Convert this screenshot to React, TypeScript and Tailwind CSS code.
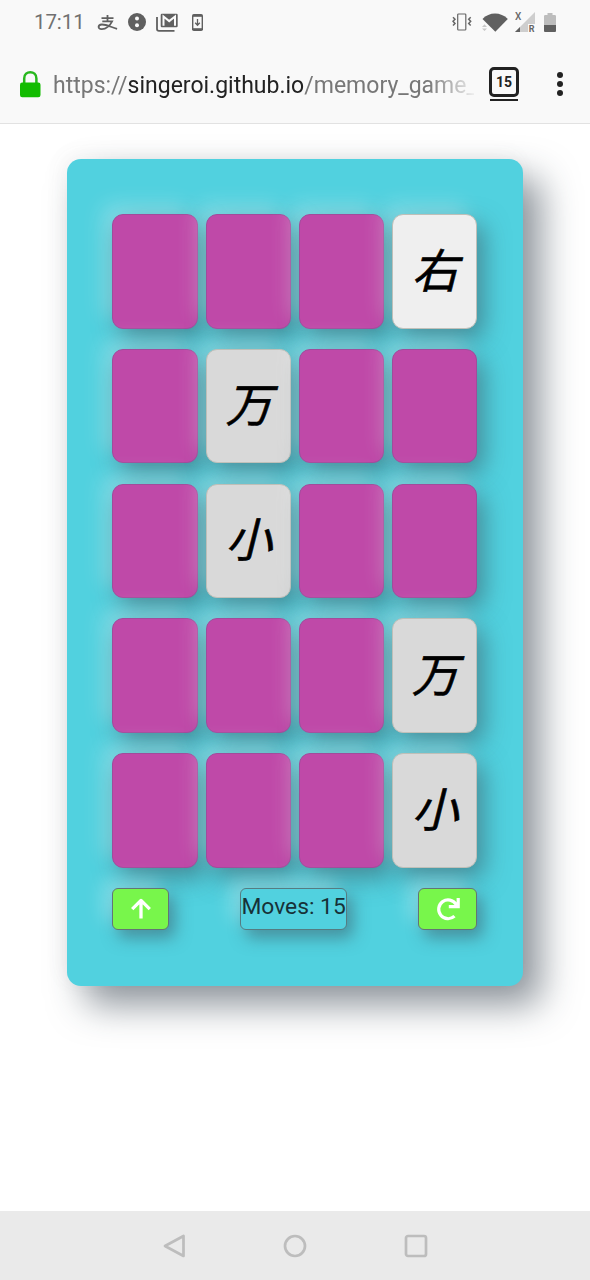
import React from "react";

type Card = { face?: string; active?: boolean };

const rows: Card[][] = [
  [{}, {}, {}, { face: "右", active: true }],
  [{}, { face: "万" }, {}, {}],
  [{}, { face: "小" }, {}, {}],
  [{}, {}, {}, { face: "万" }],
  [{}, {}, {}, { face: "小" }],
];

const raised =
  "shadow-[7px_10px_25px_rgba(55,84,95,0.56),-10px_-10px_20px_rgba(255,255,255,0.28)]";

const raisedSmall =
  "shadow-[6px_8px_16px_rgba(55,84,95,0.5),-10px_-9px_18px_rgba(255,255,255,0.27)]";

function StatusBar() {
  return (
    <div className="flex h-[44px] items-center justify-between pr-[34px] pl-[34px] text-[#707070]">
      <div className="flex items-center">
        <span className="w-[63px] pt-px text-[20.5px] leading-none tracking-[-0.1px]">17:11</span>
        <svg width="21" height="16" viewBox="0 0 20 16" fill="none" stroke="#606060" strokeWidth="1.8" className="mt-px">
          <path d="M4 3.1H16M10 0V6.3M4.8 6.4H14.6C12.6 10.5 8.5 14.3 4.2 14.2C0 14 .1 9.8 4.3 9.5C9.5 9.4 14 12.5 19.6 13.8" />
        </svg>
        <svg width="18" height="18" viewBox="0 0 18 18" className="ml-[10px]">
          <circle cx="9" cy="9" r="9" fill="#606060" />
          <circle cx="9" cy="5.6" r="2" fill="#fafafa" />
          <circle cx="9" cy="12.2" r="2" fill="#fafafa" />
        </svg>
        <svg width="23" height="19" viewBox="0 0 23 19" className="ml-[10px]" fill="none">
          <path d="M1 4V16Q1 17.8 3 17.8H18.5" stroke="#606060" strokeWidth="1.8" />
          <rect x="4.7" y=".8" width="17" height="13.5" rx="1.2" fill="#606060" />
          <path d="M7.5 12.8V3.5L13.2 8.1L19 3.5V12.8" stroke="#fafafa" strokeWidth="2" />
        </svg>
        <svg width="11" height="17" viewBox="0 0 11 17" className="ml-[13px]">
          <rect width="11" height="17" rx="1.8" fill="#606060" />
          <rect x="1.4" y="2.8" width="8.2" height="11.4" fill="#fafafa" />
          <path d="M5.5 5V11M3.2 8.8L5.5 11.2L7.8 8.8" stroke="#606060" strokeWidth="1.3" fill="none" />
        </svg>
      </div>
      <div className="flex items-center">
        <svg width="20" height="18" viewBox="0 0 20 18" fill="none" stroke="#666" strokeWidth="1.2">
          <rect x="5.7" y="1" width="8.1" height="16" rx=".8" />
          <path d="M1 4.2L3 6.2L1 8.3L3 10.5L1 12.6M18.7 4.2L16.7 6.2L18.7 8.3L16.7 10.5L18.7 12.6" strokeWidth="1.5" />
        </svg>
        <svg width="26" height="19" viewBox="0 0 26 19" className="ml-[10px]">
          <path d="M.5 6C7-1.4 19-1.4 25.8 6L13.3 18.8Z" fill="#606060" />
          <path d="M0 14L2.5 11.3L5 14ZM0 15.5L2.5 18L5 15.5Z" fill="#c8c8c8" />
        </svg>
        <svg width="21" height="22" viewBox="0 0 21 22" className="ml-[7px]">
          <path d="M0 21L20 1V21Z" fill="#cecece" />
          <path d="M0 21L5 16V21Z" fill="#606060" />
          <rect x="13" y="13" width="8" height="9" fill="#fafafa" />
          <text x="0" y="8.5" fontFamily="Roboto" fontSize="10" fontWeight="500" fill="#666">X</text>
          <text x="13.7" y="20.8" fontFamily="Roboto" fontSize="9" fontWeight="700" fill="#666">R</text>
        </svg>
        <svg width="12" height="19" viewBox="0 0 12 19" className="ml-[8px]">
          <path d="M3.5 0H8.5V2H10.8Q12 2 12 3.2V12H0V3.2Q0 2 1.2 2H3.5Z" fill="#bdbdbd" />
          <path d="M0 12H12V18Q12 19 11 19H1Q0 19 0 18Z" fill="#606060" />
        </svg>
      </div>
    </div>
  );
}

function AddressBar() {
  return (
    <div className="flex h-[79px] items-center">
      <svg width="21" height="27" viewBox="0 0 21 27" className="mt-[2px] ml-[20px]">
        <path d="M4.2 13V7.4C4.2-.8 16.4-.8 16.4 7.4V13" fill="none" stroke="#28b81e" strokeWidth="2.5" />
        <rect x="0" y="11.5" width="20.5" height="14.7" rx="2.2" fill="#12bc00" />
      </svg>
      <div className="mt-[4px] ml-[12px] w-[421px] text-[23px] leading-[30px] whitespace-nowrap text-[#777] [mask-image:linear-gradient(to_right,black_89%,transparent_101%)]">
        https://<span className="text-[#222]">singeroi.github.io</span>/memory_game_
      </div>
      <div className="ml-[15px] flex w-[30px] flex-col items-center">
        <div className="flex h-[30px] w-[30px] items-center justify-center rounded-[5px] border-[3px] border-[#222] pt-[2px] text-[14px] font-bold text-[#222]">15</div>
        <div className="mt-[2px] h-[2px] w-[28px] bg-[#222]" />
      </div>
      <div className="ml-[38px] flex flex-col gap-[3px]">
        <i className="h-[6px] w-[6px] rounded-full bg-[#222]" />
        <i className="h-[6px] w-[6px] rounded-full bg-[#222]" />
        <i className="h-[6px] w-[6px] rounded-full bg-[#222]" />
      </div>
    </div>
  );
}

function MemoryCard({ face, active }: Card) {
  const color = active ? "bg-[#efefef]" : face ? "bg-[#d9d9d9]" : "bg-[#bf49a8]";
  const edge = face ? "border-[#bfbfb8]" : "border-[#a04c9b]";
  return (
    <button
      className={`relative flex h-[114.5px] items-center justify-center rounded-[11px] border pt-px pl-px text-[46.5px] leading-none text-black italic [-webkit-text-stroke:0.6px_black] ${edge} ${color} ${raised}`}
    >
      {face}
    </button>
  );
}

export default function App() {
  return (
    <div className="flex h-[1280px] w-[590px] flex-col overflow-hidden bg-white font-[Roboto,'Noto_Sans_CJK_SC',sans-serif]">
      <header className="h-[124px] shrink-0 border-b border-[#e2e2e2] bg-[#f9f9f9]">
        <StatusBar />
        <AddressBar />
      </header>
      <main className="flex-1 overflow-hidden pt-[34.6px] pl-[67px]">
        <section className="h-[827.5px] w-[455.7px] rounded-[14px] bg-[#51d1df] px-[45.4px] pt-[55.5px] shadow-[18px_19px_36px_rgba(39,51,66,0.52),-4px_-4px_20px_rgba(100,100,100,0.06)]">
          <div className="grid grid-cols-4 gap-x-[7.8px] gap-y-[20.25px]">
            {rows.flat().map((card, i) => (
              <MemoryCard key={i} {...card} />
            ))}
          </div>
          <div className="mt-[20px] flex items-start justify-between">
            <button className={`relative flex h-[42px] w-[56.5px] items-center justify-center rounded-[6px] border border-[#637575] bg-[#78f64b] ${raisedSmall}`}>
              <svg width="20" height="21" viewBox="0 0 20 21" fill="none" stroke="white" strokeWidth="3.3" strokeLinejoin="round">
                <path d="M10 20.5V3M1.2 11.2L10 2.4L18.8 11.2" />
              </svg>
            </button>
            <div className={`relative h-[42px] w-[107px] rounded-[6px] border border-[#557c82] bg-[#51d1df] text-center text-[22.8px] leading-[35px] whitespace-nowrap text-[#173138] ${raisedSmall}`}>
              Moves: 15
            </div>
            <button className={`relative flex h-[42px] w-[59px] items-center justify-center rounded-[6px] border border-[#637575] bg-[#78f64b] ${raisedSmall}`}>
              <svg width="24" height="24" viewBox="0 0 24 24" fill="none" stroke="white" strokeWidth="3.2">
                <path d="M18.5 19.2A9.4 9.4 0 1 1 20.1 7.4L21.6 9.2M22.2 1V9.6H12.8" />
              </svg>
            </button>
          </div>
        </section>
      </main>
      <nav className="flex h-[69px] shrink-0 items-center justify-center gap-[97px] bg-[#eaeaea]">
        <svg width="23" height="24" viewBox="0 0 23 24" fill="none" stroke="#bdbdbd" strokeWidth="2.7" strokeLinejoin="round">
          <path d="M2 12L20.5 2V22Z" />
        </svg>
        <svg width="24" height="24" viewBox="0 0 24 24" fill="none" stroke="#bdbdbd" strokeWidth="2.7">
          <circle cx="12" cy="12" r="10" />
        </svg>
        <svg width="24" height="24" viewBox="0 0 24 24" fill="none" stroke="#bdbdbd" strokeWidth="2.7">
          <rect x="2" y="2" width="20" height="20" rx="2" />
        </svg>
      </nav>
    </div>
  );
}
